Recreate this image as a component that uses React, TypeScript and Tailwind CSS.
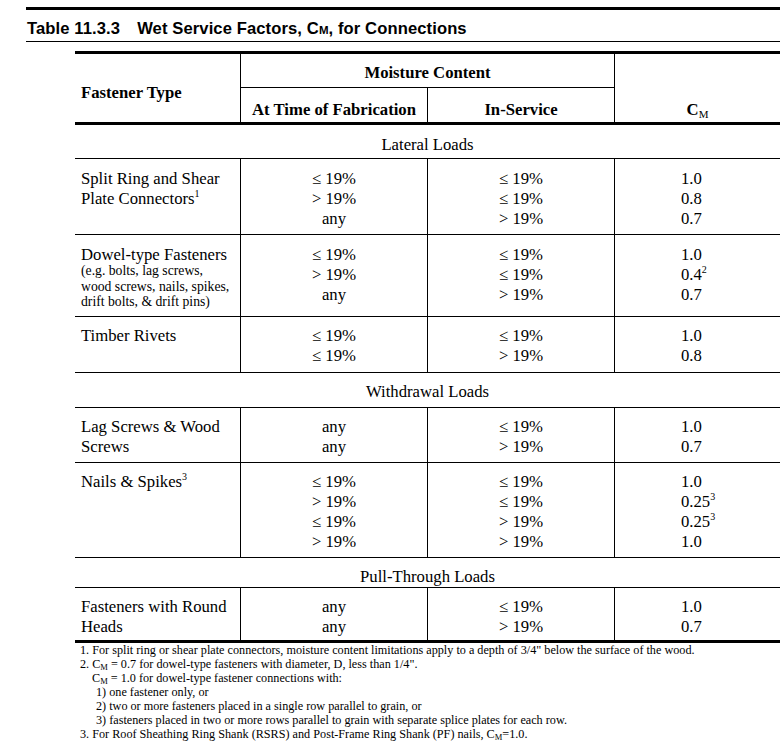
import React from 'react'

const serif = "font-['Liberation_Serif','Times_New_Roman',serif]"

function Lines({ items }: { items: React.ReactNode[] }) {
  return (
    <>
      {items.map((t, i) => <div key={i}>{t}</div>)}
    </>
  )
}

function DataRow({ h, pt, name, fab, svc, cm }: { h: string; pt: string; name: React.ReactNode; fab: React.ReactNode[]; svc: React.ReactNode[]; cm: React.ReactNode[] }) {
  return (
    <div className={`flex border-b border-black ${h}`}>
      <div className={`w-[166px] border-r border-black pl-[6px] ${pt}`}>{name}</div>
      <div className={`w-[187px] border-r border-black text-center ${pt}`}><Lines items={fab} /></div>
      <div className={`w-[187px] border-r border-black text-center ${pt}`}><Lines items={svc} /></div>
      <div className={`flex-1 pl-[66px] ${pt}`}><Lines items={cm} /></div>
    </div>
  )
}

function Section({ h, pt, label }: { h: string; pt: string; label: string }) {
  return <div className={`border-b border-black text-center ${h} ${pt}`}>{label}</div>
}

const le = '≤ 19%'
const gt = '> 19%'

export default function App() {
  return (
    <div className={`w-[780px] h-[755px] bg-white text-black overflow-hidden ${serif}`}>
      <div className="ml-[26px] pt-[7px]">
        <div className="h-[3px] bg-black" />
        <div className="h-[31px] pt-[9px] pl-[1px] font-['Liberation_Sans',Arial,sans-serif] font-bold text-[16.6px] leading-[20px] tracking-[0.1px]">
          Table 11.3.3<span className="inline-block w-[17px]" />Wet Service Factors, C<span className="text-[11.5px]">M</span>, for Connections
        </div>
        <div className="h-px bg-black" />
      </div>

      <div className="ml-[75px] mt-[9px] text-[16.7px] leading-[20px]">
        <div className="h-[3px] bg-black" />
        <div className="flex h-[68px] font-bold">
          <div className="w-[166px] border-r border-black pl-[6px] pt-[29px]">Fastener Type</div>
          <div className="w-[374px] border-r border-black flex flex-col">
            <div className="h-[34px] border-b border-black text-center pt-[9px]">Moisture Content</div>
            <div className="flex flex-1">
              <div className="w-[187px] border-r border-black text-center pt-[12px]">At Time of Fabrication</div>
              <div className="flex-1 text-center pt-[12px]">In-Service</div>
            </div>
          </div>
          <div className="flex-1 text-center pt-[46px]">C<sub className="text-[11px] font-normal">M</sub></div>
        </div>
        <div className="h-[3px] bg-black" />

        <Section h="h-[34px]" pt="pt-[10px]" label="Lateral Loads" />
        <DataRow
          h="h-[76px]" pt="pt-[10px]"
          name={<><div>Split Ring and Shear</div><div>Plate Connectors<sup className="text-[10px] -top-[0.7em]">1</sup></div></>}
          fab={[le, gt, 'any']}
          svc={[le, le, gt]}
          cm={['1.0', '0.8', '0.7']}
        />
        <DataRow
          h="h-[82px]" pt="pt-[10px]"
          name={<>
            <div>Dowel-type Fasteners</div>
            <div className="text-[13.7px] leading-[15.5px] -mt-[2px]">
              <div>(e.g. bolts, lag screws,</div>
              <div>wood screws, nails, spikes,</div>
              <div>drift bolts, &amp; drift pins)</div>
            </div>
          </>}
          fab={[le, gt, 'any']}
          svc={[le, le, gt]}
          cm={['1.0', <>0.4<sup className="text-[10px] -top-[0.7em]">2</sup></>, '0.7']}
        />
        <DataRow
          h="h-[56px]" pt="pt-[9px]"
          name={<div>Timber Rivets</div>}
          fab={[le, le]}
          svc={[le, gt]}
          cm={['1.0', '0.8']}
        />

        <Section h="h-[35px]" pt="pt-[9px]" label="Withdrawal Loads" />
        <DataRow
          h="h-[55px]" pt="pt-[9px]"
          name={<><div>Lag Screws &amp; Wood</div><div>Screws</div></>}
          fab={['any', 'any']}
          svc={[le, gt]}
          cm={['1.0', '0.7']}
        />
        <DataRow
          h="h-[95px]" pt="pt-[9px]"
          name={<div>Nails &amp; Spikes<sup className="text-[10px] -top-[0.7em]">3</sup></div>}
          fab={[le, gt, le, gt]}
          svc={[le, le, gt, gt]}
          cm={['1.0', <>0.25<sup className="text-[10px] -top-[0.7em]">3</sup></>, <>0.25<sup className="text-[10px] -top-[0.7em]">3</sup></>, '1.0']}
        />

        <Section h="h-[30px]" pt="pt-[9px]" label="Pull-Through Loads" />
        <div className="flex h-[52px]">
          <div className="w-[166px] border-r border-black pl-[6px] pt-[9px]"><div>Fasteners with Round</div><div>Heads</div></div>
          <div className="w-[187px] border-r border-black text-center pt-[9px]"><div>any</div><div>any</div></div>
          <div className="w-[187px] border-r border-black text-center pt-[9px]"><div>{le}</div><div>{gt}</div></div>
          <div className="flex-1 pl-[66px] pt-[9px]"><div>1.0</div><div>0.7</div></div>
        </div>
        <div className="h-[3px] bg-black" />

        <div className="pl-[5px] text-[12.2px] leading-[14px]">
          <p>1. For split ring or shear plate connectors, moisture content limitations apply to a depth of 3/4" below the surface of the wood.</p>
          <p>2. C<sub className="text-[8.5px] top-[0.2em]">M</sub> = 0.7 for dowel-type fasteners with diameter, D, less than 1/4".</p>
          <p className="pl-[12px]">C<sub className="text-[8.5px] top-[0.2em]">M</sub> = 1.0 for dowel-type fastener connections with:</p>
          <p className="pl-[16px]">1) one fastener only, or</p>
          <p className="pl-[16px]">2) two or more fasteners placed in a single row parallel to grain, or</p>
          <p className="pl-[16px]">3) fasteners placed in two or more rows parallel to grain with separate splice plates for each row.</p>
          <p>3. For Roof Sheathing Ring Shank (RSRS) and Post-Frame Ring Shank (PF) nails, C<sub className="text-[8.5px] top-[0.2em]">M</sub>=1.0.</p>
        </div>
      </div>
    </div>
  )
}
